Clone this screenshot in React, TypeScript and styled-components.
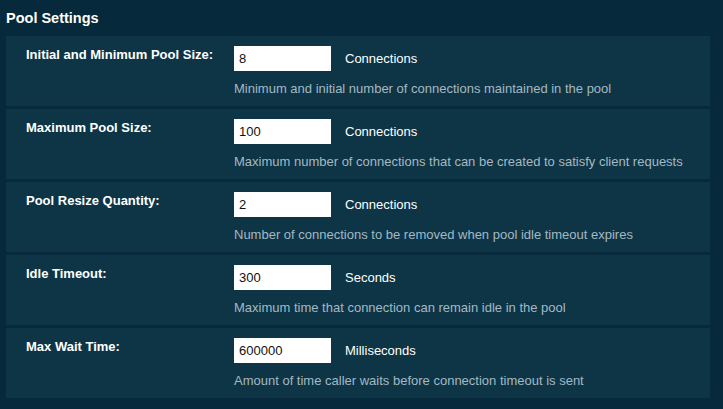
import * as React from 'react';
import styled, {createGlobalStyle} from 'styled-components';

const GlobalStyle = createGlobalStyle`
	html, body {
		margin: 0;
		padding: 0;
		background: #062a3b;
	}
	body {
		font-family: "Liberation Sans", Arial, sans-serif;
		color: #fff;
	}
`;

const rows = [
	{label: 'Initial and Minimum Pool Size:', value: '8', unit: 'Connections', help: 'Minimum and initial number of connections maintained in the pool'},
	{label: 'Maximum Pool Size:', value: '100', unit: 'Connections', help: 'Maximum number of connections that can be created to satisfy client requests'},
	{label: 'Pool Resize Quantity:', value: '2', unit: 'Connections', help: 'Number of connections to be removed when pool idle timeout expires'},
	{label: 'Idle Timeout:', value: '300', unit: 'Seconds', help: 'Maximum time that connection can remain idle in the pool'},
	{label: 'Max Wait Time:', value: '600000', unit: 'Milliseconds', help: 'Amount of time caller waits before connection timeout is sent'},
];

export default function App() {
	return <Page>
		<GlobalStyle/>
		<Title>Pool Settings</Title>
		<Panel>
			{rows.map((row) => (
				<Row key={row.label}>
					<Label>{row.label}</Label>
					<Field>
						<InputLine>
							<Input defaultValue={row.value}/>
							<Unit>{row.unit}</Unit>
						</InputLine>
						<Help>{row.help}</Help>
					</Field>
				</Row>
			))}
		</Panel>
	</Page>;
}

const Page = styled.div`
	width: 723px;
	height: 409px;
	box-sizing: border-box;
	padding: 10px 13px 0 6px;
	background: #062a3b;
`

const Title = styled.div`
	font-size: 14.5px;
	font-weight: bold;
	line-height: 16px;
	color: #fff;
	margin-bottom: 10px;
`

const Panel = styled.div`
	display: flex;
	flex-direction: column;
	gap: 3px;
`

const Row = styled.div`
	display: grid;
	grid-template-columns: 208px 1fr;
	padding: 10px 20px 10px;
	background: #0e3546;
	height: 70px;
	box-sizing: border-box;
`

const Label = styled.div`
	font-size: 13px;
	font-weight: bold;
	line-height: 15px;
	padding-top: 1px;
	color: #fff;
`

const Field = styled.div`
	display: flex;
	flex-direction: column;
`

const InputLine = styled.div`
	display: flex;
	align-items: center;
	gap: 14px;
`

const Input = styled.input`
	width: 97px;
	height: 25px;
	box-sizing: border-box;
	border: none;
	outline: none;
	padding: 0 5px;
	font-family: "Liberation Sans", Arial, sans-serif;
	font-size: 13px;
	color: #111;
	background: #fff;
`

const Unit = styled.span`
	font-size: 13px;
	color: #fff;
`

const Help = styled.div`
	margin-top: 10px;
	font-size: 13px;
	line-height: 15px;
	color: #a3b9c3;
`
